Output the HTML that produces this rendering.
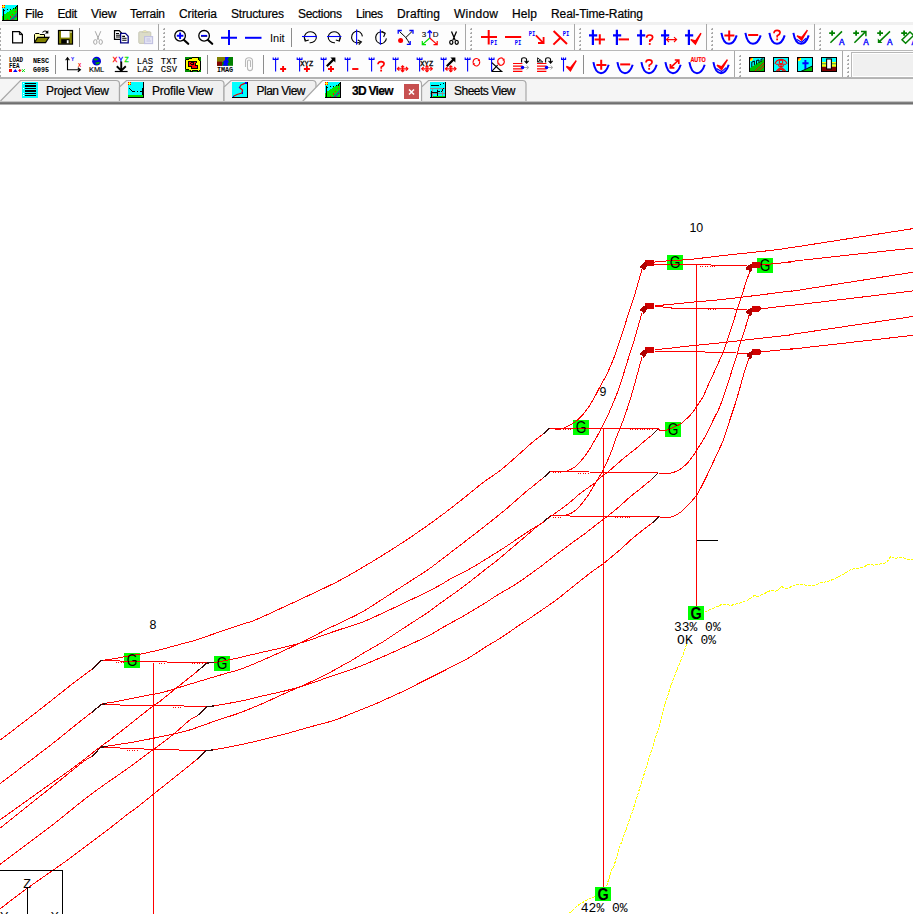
<!DOCTYPE html>
<html><head><meta charset="utf-8"><title>PLS-CADD 3D View</title>
<style>
html,body{margin:0;padding:0;}
body{width:913px;height:914px;overflow:hidden;background:#fff;position:relative;font-family:"Liberation Sans",sans-serif;font-size:12px;color:#000;}
#menubar{position:absolute;left:0;top:0;width:913px;height:22px;background:#fff;}
#menubar span{position:absolute;top:5.5px;height:16px;line-height:16px;white-space:nowrap;font-size:12px;-webkit-text-stroke:0.2px #000;}
#band{position:absolute;left:0;top:22px;width:913px;height:3px;background:#f0f0f0;}
#tb1{position:absolute;left:0;top:25px;width:913px;height:25px;background:#fdfdfd;}
#l50{position:absolute;left:0;top:50px;width:913px;height:1px;background:#b8b8b8;}
#tb2{position:absolute;left:0;top:51px;width:913px;height:26px;background:#fdfdfd;}
#l77{position:absolute;left:0;top:77px;width:913px;height:2px;background:#b2b2b2;}
#tabs{position:absolute;left:0;top:79px;width:913px;height:22px;background:#f5f5f5;}
.gd{position:absolute;width:2px;height:2px;background:linear-gradient(135deg,#e8e8e8 0,#e8e8e8 30%,#a8a8a8 31%);}
.sp{position:absolute;width:1px;background:#a8a8a8;}
.sq{position:absolute;width:1px;background:#8c8c8c;}
.ic{position:absolute;width:16px;height:16px;overflow:visible;}
.tabt{position:absolute;top:83px;height:16px;line-height:16px;font-size:12px;white-space:nowrap;-webkit-text-stroke:0.2px #000;}
#view{position:absolute;left:0;top:105px;width:913px;height:809px;background:#fff;overflow:hidden;}
#combo{position:absolute;left:852px;top:53px;width:70px;height:24px;background:#f0f0f0;border:1px solid #fff;outline:1px solid #b8b8b8;box-sizing:border-box;}
</style></head><body>

<div id="menubar">
<svg class="ic" style="left:2px;top:5px" viewBox="0 0 16 16" shape-rendering="crispEdges"><rect x="0" y="0" width="16" height="16" fill="#00ffff"/><path d="M0,11 L15,1 V16 H0 Z" fill="#00e800"/><path d="M6,16 L15,7 V11 L11,16 Z" fill="#108088"/><path d="M5,15.5 L14.5,5.5" stroke="#ff0000" stroke-width="1" stroke-dasharray="1.4 2.6" fill="none"/><path d="M10,15.5 L14.5,10.5" stroke="#ff0000" stroke-width="1" stroke-dasharray="1.4 2.6" fill="none"/><path d="M1.5,4 V15.5 M0,15.5 H16 M15.5,0 V16" stroke="#000" stroke-width="1" fill="none"/><rect x="2" y="5" width="1" height="1" fill="#000"/><rect x="5" y="4" width="1" height="1" fill="#000"/><rect x="8" y="4" width="1" height="1" fill="#000"/><rect x="11" y="3" width="1" height="1" fill="#000"/><rect x="13" y="2" width="1.4" height="1.6" fill="#000"/><rect x="14" y="1" width="1" height="1" fill="#000"/><rect x="0" y="0" width="3" height="3" fill="#ff0000"/><rect x="1" y="0" width="1" height="3" fill="#ffff00"/><rect x="0" y="1" width="3" height="1" fill="#ffff00"/></svg>
<span style="left:25px;letter-spacing:-0.281px">File</span>
<span style="left:57.5px;letter-spacing:-0.396px">Edit</span>
<span style="left:91px;letter-spacing:-0.099px">View</span>
<span style="left:130px;letter-spacing:-0.281px">Terrain</span>
<span style="left:179px;letter-spacing:-0.096px">Criteria</span>
<span style="left:231px;letter-spacing:-0.188px">Structures</span>
<span style="left:298px;letter-spacing:-0.290px">Sections</span>
<span style="left:356px;letter-spacing:-0.422px">Lines</span>
<span style="left:397px;letter-spacing:0.138px">Drafting</span>
<span style="left:454px;letter-spacing:0.263px">Window</span>
<span style="left:512px;letter-spacing:0.104px">Help</span>
<span style="left:551px;letter-spacing:-0.106px">Real-Time-Rating</span>
</div>
<div id="band"></div><div id="tb1"></div><div id="l50"></div><div id="tb2"></div><div id="l77"></div>
<div id="combo"></div>
<i class="gd" style="left:-1px;top:28px"></i><i class="gd" style="left:-1px;top:32px"></i><i class="gd" style="left:-1px;top:36px"></i><i class="gd" style="left:-1px;top:40px"></i><i class="gd" style="left:-1px;top:44px"></i><i class="gd" style="left:-1px;top:48px"></i><i class="gd" style="left:-1px;top:55px"></i><i class="gd" style="left:-1px;top:59px"></i><i class="gd" style="left:-1px;top:63px"></i><i class="gd" style="left:-1px;top:67px"></i><i class="gd" style="left:-1px;top:71px"></i><i class="gd" style="left:-1px;top:75px"></i>
<i class="sp" style="left:158px;top:24px;height:26px"></i>
<i class="gd" style="left:163px;top:28px"></i><i class="gd" style="left:163px;top:32px"></i><i class="gd" style="left:163px;top:36px"></i><i class="gd" style="left:163px;top:40px"></i><i class="gd" style="left:163px;top:44px"></i><i class="gd" style="left:163px;top:48px"></i>
<i class="sp" style="left:465px;top:24px;height:26px"></i>
<i class="gd" style="left:470px;top:28px"></i><i class="gd" style="left:470px;top:32px"></i><i class="gd" style="left:470px;top:36px"></i><i class="gd" style="left:470px;top:40px"></i><i class="gd" style="left:470px;top:44px"></i><i class="gd" style="left:470px;top:48px"></i>
<i class="sp" style="left:574px;top:24px;height:26px"></i>
<i class="gd" style="left:579px;top:28px"></i><i class="gd" style="left:579px;top:32px"></i><i class="gd" style="left:579px;top:36px"></i><i class="gd" style="left:579px;top:40px"></i><i class="gd" style="left:579px;top:44px"></i><i class="gd" style="left:579px;top:48px"></i>
<i class="sp" style="left:706px;top:24px;height:26px"></i>
<i class="gd" style="left:711px;top:28px"></i><i class="gd" style="left:711px;top:32px"></i><i class="gd" style="left:711px;top:36px"></i><i class="gd" style="left:711px;top:40px"></i><i class="gd" style="left:711px;top:44px"></i><i class="gd" style="left:711px;top:48px"></i>
<i class="sp" style="left:814px;top:24px;height:26px"></i>
<i class="gd" style="left:819px;top:28px"></i><i class="gd" style="left:819px;top:32px"></i><i class="gd" style="left:819px;top:36px"></i><i class="gd" style="left:819px;top:40px"></i><i class="gd" style="left:819px;top:44px"></i><i class="gd" style="left:819px;top:48px"></i>
<i class="sq" style="left:79px;top:28px;height:19px"></i>
<i class="sq" style="left:291px;top:28px;height:19px"></i>
<i class="sp" style="left:734px;top:51px;height:26px"></i>
<i class="gd" style="left:739px;top:55px"></i><i class="gd" style="left:739px;top:59px"></i><i class="gd" style="left:739px;top:63px"></i><i class="gd" style="left:739px;top:67px"></i><i class="gd" style="left:739px;top:71px"></i><i class="gd" style="left:739px;top:75px"></i>
<i class="sp" style="left:842px;top:51px;height:26px"></i>
<i class="gd" style="left:847px;top:55px"></i><i class="gd" style="left:847px;top:59px"></i><i class="gd" style="left:847px;top:63px"></i><i class="gd" style="left:847px;top:67px"></i><i class="gd" style="left:847px;top:71px"></i><i class="gd" style="left:847px;top:75px"></i>
<i class="sq" style="left:55px;top:55px;height:19px"></i>
<i class="sq" style="left:207px;top:55px;height:19px"></i>
<i class="sq" style="left:263px;top:55px;height:19px"></i>
<i class="sq" style="left:583px;top:55px;height:19px"></i>
<svg class="ic" style="left:10px;top:30px" viewBox="0 0 16 16"><path d="M2.6,1.6 H9.4 L12.4,4.6 V12.9 H2.6 Z" fill="#fff" stroke="#000" stroke-width="1.2"/><path d="M9.4,1.6 V4.6 H12.4" fill="none" stroke="#000" stroke-width="1"/></svg>
<svg class="ic" style="left:34px;top:30px" viewBox="0 0 16 16"><path d="M0.5,12.5 V4.5 L1.5,3.5 H5 L6,4.5 H10.5 V7" fill="#ffffa8" stroke="#000" stroke-width="1"/><path d="M0.6,12.6 L3.6,7.4 H15 L11.6,12.6 Z" fill="#808000" stroke="#000" stroke-width="1.1"/><path d="M8.5,2.5 Q10.5,0 13,1.8" fill="none" stroke="#000" stroke-width="1.1"/><path d="M14.3,0.2 V3.6 H10.9 Z" fill="#000"/></svg>
<svg class="ic" style="left:58px;top:30px" viewBox="0 0 16 16"><rect x="0.5" y="0.5" width="14" height="13.6" fill="#808000" stroke="#000" stroke-width="1.2"/><rect x="3" y="1" width="8.6" height="6.6" fill="#fff"/><rect x="12.4" y="1.4" width="1.2" height="1.4" fill="#fff"/><rect x="3.2" y="9.2" width="8.4" height="4.4" fill="#000"/><rect x="8.8" y="10.2" width="1.8" height="3" fill="#fff"/></svg>
<svg class="ic" style="left:90px;top:30px" viewBox="0 0 16 16"><g fill="none" stroke="#a8a8a8" stroke-width="1.0"><path d="M5.2,1.2 L8.9,9.8 M10.8,1.2 L7.1,9.8"/><ellipse cx="5.3" cy="12" rx="1.7" ry="2.3"/><ellipse cx="10.7" cy="12" rx="1.7" ry="2.3"/></g></svg>
<svg class="ic" style="left:114px;top:30px" viewBox="0 0 16 16"><path d="M0.5,0.7 H5.2 L7.5,3 V9.3 H0.5 Z" fill="#fff" stroke="#000" stroke-width="1.2"/><path d="M2,3.5 H5 M2,5.2 H6 M2,7 H6" stroke="#000" stroke-width="1"/><path d="M6.6,3.4 H11.4 L14.2,6.2 V12.8 H6.6 Z" fill="#fff" stroke="#000080" stroke-width="1.3"/><path d="M8.2,6.4 H11 M8.2,8.3 H12.6 M8.2,10.3 H12.6" stroke="#000" stroke-width="1.1"/></svg>
<svg class="ic" style="left:138px;top:30px" viewBox="0 0 16 16"><rect x="0.8" y="1.8" width="12" height="11.6" rx="1" fill="#dcdcc8" stroke="#c8c8b8" stroke-width="1"/><path d="M4,2.5 L5.5,0.8 H8.2 L9.8,2.5 Z" fill="#f4f0b0" stroke="#c8c8b8" stroke-width="0.8"/><rect x="6.6" y="6.6" width="8" height="7" fill="#e4e4f4" stroke="#c0c0e0" stroke-width="1.1"/><path d="M8.4,9 H12 M8.4,11 H13" stroke="#c0c0e0" stroke-width="1"/></svg>
<svg class="ic" style="left:174px;top:30px" viewBox="0 0 16 16"><circle cx="6.1" cy="5.8" r="5.3" fill="#fff" stroke="#000" stroke-width="1.3"/><path d="M10,10 L14.2,13.8" stroke="#000" stroke-width="2.2" stroke-linecap="round"/><path d="M2.8,5.8 H9.4 M6.1,2.5 V9.1" stroke="#0000ff" stroke-width="1.9"/></svg>
<svg class="ic" style="left:198px;top:30px" viewBox="0 0 16 16"><circle cx="6.1" cy="5.8" r="5.3" fill="#fff" stroke="#000" stroke-width="1.3"/><path d="M10,10 L14.2,13.8" stroke="#000" stroke-width="2.2" stroke-linecap="round"/><path d="M3,5.8 H9.2" stroke="#0000ff" stroke-width="1.8"/><path d="M3,6.4 H9.2" stroke="#000" stroke-width="0.5"/></svg>
<svg class="ic" style="left:222px;top:30px" viewBox="0 0 16 16"><path d="M-1,7.8 H15 M7,0 V15" stroke="#0000ff" stroke-width="2" fill="none"/></svg>
<svg class="ic" style="left:246px;top:30px" viewBox="0 0 16 16"><path d="M-1,7.8 H15.5" stroke="#0000ff" stroke-width="2" fill="none"/></svg>
<svg class="ic" style="left:270px;top:30px" viewBox="0 0 16 16"><text x="0" y="12" font-family="Liberation Sans, sans-serif" font-size="11" fill="#000">Init</text></svg>
<svg class="ic" style="left:302px;top:30px" viewBox="0 0 16 16"><path d="M3.4,10.3 A6,5.5 0 1 1 7.6,12.7" fill="none" stroke="#000" stroke-width="1.1"/><path d="M2.2,7.4 L3.2,11 L6.8,10" fill="none" stroke="#000" stroke-width="1.1"/><path d="M0,6.5 H15" stroke="#0000ff" stroke-width="1.1"/></svg>
<svg class="ic" style="left:326px;top:30px" viewBox="0 0 16 16"><path d="M13.2,10.3 A6,5.5 0 1 0 9,12.7" fill="none" stroke="#000" stroke-width="1.1"/><path d="M14.4,7.4 L13.4,11 L9.8,10" fill="none" stroke="#000" stroke-width="1.1"/><path d="M1,6.5 H15.4" stroke="#0000ff" stroke-width="1.1"/></svg>
<svg class="ic" style="left:350px;top:30px" viewBox="0 0 16 16"><path d="M10.6,11.4 A5.4,5.8 0 1 1 12.4,6.4" fill="none" stroke="#000" stroke-width="1.1"/><path d="M7.8,10 L11.4,11.8 L8.8,14.6" fill="none" stroke="#000" stroke-width="1.1"/><path d="M6.6,-0.4 V14.8" stroke="#0000ff" stroke-width="1.1"/></svg>
<svg class="ic" style="left:374px;top:30px" viewBox="0 0 16 16"><path d="M10.6,3.4 A5.4,5.8 0 1 0 12.4,8.4" fill="none" stroke="#000" stroke-width="1.1"/><path d="M7.6,1.2 L11.2,3.2 L9.6,7" fill="none" stroke="#000" stroke-width="1.1"/><path d="M6.4,-0.4 V14.8" stroke="#0000ff" stroke-width="1.1"/></svg>
<svg class="ic" style="left:398px;top:30px" viewBox="0 0 16 16"><path d="M1.5,1.5 L7.8,7.5 L14,1.5 M7.8,7.5 Q9.6,10 11.6,13.6" fill="none" stroke="#000" stroke-width="1"/><path d="M0.2,3.8 V0.5 H3.8 M11.4,0.5 H15 V3.8 M8.8,14.4 H12.2 V11" fill="none" stroke="#0000ff" stroke-width="1.3"/><circle cx="2.6" cy="10.6" r="2.5" fill="#ff0000"/></svg>
<svg class="ic" style="left:422px;top:30px" viewBox="0 0 16 16"><text x="-0.2" y="7.4" font-family="Liberation Sans, monospace" font-size="8" font-weight="normal" fill="#000000" stroke="#000000" stroke-width="0.1" text-anchor="start">3</text><text x="10.8" y="7.4" font-family="Liberation Sans, monospace" font-size="8" font-weight="normal" fill="#000000" stroke="#000000" stroke-width="0.1" text-anchor="start">D</text><path d="M7.75,8 V0.8 M5.6,3 L7.75,0.6 L9.9,3" fill="none" stroke="#0000ff" stroke-width="1.2"/><path d="M7.75,8 L0.6,14.4 M0.3,11 V14.7 H4" fill="none" stroke="#00e000" stroke-width="1.2"/><path d="M7.75,8 L14.9,14.4 M15.2,11 V14.7 H11.5" fill="none" stroke="#ff0000" stroke-width="1.2"/></svg>
<svg class="ic" style="left:446px;top:30px" viewBox="0 0 16 16"><g fill="none" stroke="#000" stroke-width="1.25"><path d="M5.5,1.5 L9.2,10.2 M10.5,1.5 L6.8,10.2"/><ellipse cx="5.3" cy="12.3" rx="1.6" ry="2"/><ellipse cx="10.7" cy="12.3" rx="1.6" ry="2"/></g></svg>
<svg class="ic" style="left:481px;top:30px" viewBox="0 0 16 16"><path d="M0,7 H16 M7.7,0 V14.6" stroke="#ff0000" stroke-width="2" fill="none"/><text x="0" y="0" font-family="Liberation Mono, monospace" font-size="7.6" font-weight="bold" fill="#0000ff" stroke="#0000ff" stroke-width="0" text-anchor="start" transform="translate(9.6 14.6) scale(0.72 1)">PI</text></svg>
<svg class="ic" style="left:505px;top:30px" viewBox="0 0 16 16"><path d="M0,7 H16.2" stroke="#ff0000" stroke-width="2" fill="none"/><text x="0" y="0" font-family="Liberation Mono, monospace" font-size="7.6" font-weight="bold" fill="#0000ff" stroke="#0000ff" stroke-width="0" text-anchor="start" transform="translate(9.8 14.6) scale(0.72 1)">PI</text></svg>
<svg class="ic" style="left:529px;top:30px" viewBox="0 0 16 16"><text x="0" y="0" font-family="Liberation Mono, monospace" font-size="7.6" font-weight="bold" fill="#0000ff" stroke="#0000ff" stroke-width="0" text-anchor="start" transform="translate(-0.2 5.8) scale(0.72 1)">PI</text><path d="M6.9,5.4 L14.2,12.8 M9,13 H14.6 V7" stroke="#ff0000" stroke-width="1.8" fill="none"/></svg>
<svg class="ic" style="left:553px;top:30px" viewBox="0 0 16 16"><path d="M0.6,1 L14,14 M0.4,14.6 L8.2,7" stroke="#ff0000" stroke-width="2" fill="none"/><text x="0" y="0" font-family="Liberation Mono, monospace" font-size="7.6" font-weight="bold" fill="#0000ff" stroke="#0000ff" stroke-width="0" text-anchor="start" transform="translate(9.8 5.8) scale(0.72 1)">PI</text></svg>
<svg class="ic" style="left:590px;top:30px" viewBox="0 0 16 16"><path d="M2.9,-0.2 V15 M-1,5.4 H7.2" stroke="#0000ff" stroke-width="2.2" fill="none"/><path d="M4.6,9.4 H15 M9.8,4.2 V14.4" stroke="#ff0000" stroke-width="2" fill="none"/></svg>
<svg class="ic" style="left:614px;top:30px" viewBox="0 0 16 16"><path d="M2.9,-0.2 V15 M-1,5.4 H7.2" stroke="#0000ff" stroke-width="2.2" fill="none"/><path d="M4.6,9.4 H15" stroke="#ff0000" stroke-width="2" fill="none"/></svg>
<svg class="ic" style="left:638px;top:30px" viewBox="0 0 16 16"><path d="M2.9,-0.2 V15 M-1,5.4 H7.2" stroke="#0000ff" stroke-width="2.2" fill="none"/><path d="M8.6,7.744000000000001 Q8.6,5 11.638,5 Q14.676,5 14.676,7.45 Q14.676,9.116 11.838,10.39 V12.056000000000001" fill="none" stroke="#ff0000" stroke-width="1.7"/><rect x="10.838" y="13.100000000000001" width="1.8" height="1.8" fill="#ff0000"/></svg>
<svg class="ic" style="left:662px;top:30px" viewBox="0 0 16 16"><path d="M2.9,-0.2 V15 M-1,5.4 H7.2" stroke="#0000ff" stroke-width="2.2" fill="none"/><path d="M4.4,9.6 H14.6 M7,7.2 L4.4,9.6 L7,12 M12,7.2 L14.6,9.6 L12,12" stroke="#ff0000" stroke-width="1.1" fill="none"/></svg>
<svg class="ic" style="left:686px;top:30px" viewBox="0 0 16 16"><path d="M2.9,-0.2 V15 M-1,5.4 H7.2" stroke="#0000ff" stroke-width="2.2" fill="none"/><path d="M4.8,9.6 L9.4,14 L15,3.2 L9.6,11 Z" fill="#ff0000" stroke="#ff0000" stroke-width="1.4" stroke-linejoin="miter"/></svg>
<svg class="ic" style="left:721px;top:30px" viewBox="0 0 16 16"><path d="M0.4,2.8 Q2.2,13.8 8,13.8 Q13,13.8 15.7,5.4" fill="none" stroke="#0000ff" stroke-width="2"/><path d="M3.4,5.5 H13.4 M8.2,0.4 V10.4" stroke="#ff0000" stroke-width="2" fill="none"/></svg>
<svg class="ic" style="left:745px;top:30px" viewBox="0 0 16 16"><path d="M0.4,2.8 Q2.2,13.8 8,13.8 Q13,13.8 15.7,5.4" fill="none" stroke="#0000ff" stroke-width="2"/><path d="M3.2,5 H13.2" stroke="#ff0000" stroke-width="2" fill="none"/></svg>
<svg class="ic" style="left:769px;top:30px" viewBox="0 0 16 16"><path d="M0.4,2.8 Q2.2,13.8 8,13.8 Q13,13.8 15.7,5.4" fill="none" stroke="#0000ff" stroke-width="2"/><path d="M5,3.1440000000000006 Q5,0.4 8.038,0.4 Q11.076,0.4 11.076,2.85 Q11.076,4.516000000000001 8.238,5.790000000000001 V7.456" fill="none" stroke="#ff0000" stroke-width="1.7"/><rect x="7.238" y="8.500000000000002" width="1.8" height="1.8" fill="#ff0000"/></svg>
<svg class="ic" style="left:793px;top:30px" viewBox="0 0 16 16"><path d="M0.4,2.8 Q2.2,13.8 8,13.8 Q13,13.8 15.7,5.4" fill="none" stroke="#0000ff" stroke-width="2"/><path d="M4,5.8 L8.6,10.2 L14.4,0.2 L8.8,7.4 Z" fill="#ff0000" stroke="#ff0000" stroke-width="1.4"/><path d="M3.4,9.2 L8.6,12.2 L13.2,8.2" fill="none" stroke="#0000ff" stroke-width="1.2"/></svg>
<svg class="ic" style="left:829px;top:30px" viewBox="0 0 16 16"><path d="M0.2,3.1 H6 M3.1,0.4 V5.8" stroke="#008000" stroke-width="1.8" fill="none"/><path d="M1.4,12.8 L13,1.4" stroke="#008000" stroke-width="1.5"/><text x="10" y="14.8" font-family="Liberation Mono, monospace" font-size="9.2" font-weight="normal" fill="#0000ff" stroke="#0000ff" stroke-width="0.35" text-anchor="start">A</text></svg>
<svg class="ic" style="left:853px;top:30px" viewBox="0 0 16 16"><path d="M0.2,3.1 H6 M3.1,0.4 V5.8" stroke="#008000" stroke-width="1.8" fill="none"/><path d="M1.4,12.8 L12.6,1.6 M8,1.4 H12.9 V6.2" stroke="#008000" stroke-width="1.5" fill="none"/><text x="10.2" y="14.8" font-family="Liberation Mono, monospace" font-size="9.2" font-weight="normal" fill="#0000ff" stroke="#0000ff" stroke-width="0.35" text-anchor="start">A</text></svg>
<svg class="ic" style="left:877px;top:30px" viewBox="0 0 16 16"><path d="M0.2,3.1 H6 M3.1,0.4 V5.8" stroke="#008000" stroke-width="1.8" fill="none"/><path d="M1.6,12.4 L13,1.4" stroke="#008000" stroke-width="1.5" fill="none"/><path d="M0.8,8.6 V13 H5.4 Z" fill="#008000"/><text x="10" y="14.8" font-family="Liberation Mono, monospace" font-size="9.2" font-weight="normal" fill="#0000ff" stroke="#0000ff" stroke-width="0.35" text-anchor="start">A</text></svg>
<svg class="ic" style="left:901px;top:30px" viewBox="0 0 16 16"><path d="M0.2,3.1 H6 M3.1,0.4 V5.8" stroke="#008000" stroke-width="1.8" fill="none"/><path d="M1,9.8 L9,2 L12.6,5.4 L4.6,13.2 Z" stroke="#008000" stroke-width="1.5" fill="none"/><text x="10.6" y="14.8" font-family="Liberation Mono, monospace" font-size="9.2" font-weight="normal" fill="#0000ff" stroke="#0000ff" stroke-width="0.35" text-anchor="start">A</text></svg>
<svg class="ic" style="left:9px;top:57px" viewBox="0 0 16 16"><text x="0" y="0" font-family="Liberation Mono, monospace" font-size="7.4" font-weight="bold" fill="#000000" stroke="#000000" stroke-width="0" text-anchor="start" transform="translate(0 5.3) scale(0.79 1)">LOAD</text><text x="0" y="0" font-family="Liberation Mono, monospace" font-size="7.4" font-weight="bold" fill="#000000" stroke="#000000" stroke-width="0" text-anchor="start" transform="translate(0 11.2) scale(0.79 1)">FEA</text><rect x="0" y="12" width="3" height="3" fill="#ff0000"/><path d="M4,15 L6.3,12 L8.6,15 Z" fill="#0000ff"/><path d="M9.4,13.5 H12.2 M10.8,12.1 V14.9" stroke="#ff0000" stroke-width="1.2"/><path d="M13,12.2 L15.8,15 M15.8,12.2 L13,15" stroke="#00e000" stroke-width="1"/></svg>
<svg class="ic" style="left:33px;top:57px" viewBox="0 0 16 16"><text x="0" y="0" font-family="Liberation Mono, monospace" font-size="7.8" font-weight="bold" fill="#000000" stroke="#000000" stroke-width="0" text-anchor="start" transform="translate(0 5.6) scale(0.86 1)">NESC</text><text x="0" y="0" font-family="Liberation Mono, monospace" font-size="7.8" font-weight="bold" fill="#000000" stroke="#000000" stroke-width="0" text-anchor="start" transform="translate(0 14.5) scale(0.86 1)">G095</text></svg>
<svg class="ic" style="left:65px;top:57px" viewBox="0 0 16 16"><path d="M2.5,1 V12.75 H15 M0.6,3.2 L2.5,0.6 L4.4,3.2 M12.8,10.8 L15.4,12.75 L12.8,14.7" stroke="#000" stroke-width="1.1" fill="none"/><text x="6.1" y="3.7" font-family="Liberation Sans, monospace" font-size="4.8" font-weight="bold" fill="#0000ff" stroke="#0000ff" stroke-width="0" text-anchor="start">Y</text><text x="12.9" y="10.3" font-family="Liberation Sans, monospace" font-size="4.8" font-weight="bold" fill="#ff0000" stroke="#ff0000" stroke-width="0" text-anchor="start">X</text></svg>
<svg class="ic" style="left:89px;top:57px" viewBox="0 0 16 16"><circle cx="7.6" cy="4.2" r="4.4" fill="#0000e0"/><path d="M4.6,2.2 Q7,0.4 9.4,2.4 Q7.6,3.8 5.6,3.4 Z M6,5.8 Q8.8,4.6 11.4,5.4 Q9.6,7.6 7.4,7.4 Z" fill="#00a000"/><text x="0" y="0" font-family="Liberation Sans, monospace" font-size="7.8" font-weight="normal" fill="#000000" stroke="#000000" stroke-width="0.15" text-anchor="start" transform="translate(0 15) scale(0.95 1)">KML</text></svg>
<svg class="ic" style="left:113px;top:57px" viewBox="0 0 16 16"><text x="-0.2" y="5" font-family="Liberation Sans, monospace" font-size="6.8" font-weight="normal" fill="#ff0000" stroke="#ff0000" stroke-width="0.3" text-anchor="start">X</text><text x="5.6" y="5" font-family="Liberation Sans, monospace" font-size="6.8" font-weight="normal" fill="#0000ff" stroke="#0000ff" stroke-width="0.3" text-anchor="start">Y</text><text x="11.4" y="5" font-family="Liberation Sans, monospace" font-size="6.8" font-weight="normal" fill="#00e000" stroke="#00e000" stroke-width="0.3" text-anchor="start">Z</text><path d="M8.25,4.6 V13.4 M3.8,9.2 L8.25,13.6 L12.8,9.2" stroke="#000" stroke-width="1.9" fill="none"/><path d="M1.8,14.5 H14.6" stroke="#000" stroke-width="1.2"/></svg>
<svg class="ic" style="left:137px;top:57px" viewBox="0 0 16 16"><text x="-0.2" y="6.5" font-family="Liberation Mono, monospace" font-size="8.9" font-weight="normal" fill="#000000" stroke="#000000" stroke-width="0.12" text-anchor="start" letter-spacing="0.1">LAS</text><text x="-0.2" y="14.5" font-family="Liberation Mono, monospace" font-size="8.9" font-weight="normal" fill="#000000" stroke="#000000" stroke-width="0.12" text-anchor="start" letter-spacing="0.1">LAZ</text></svg>
<svg class="ic" style="left:161px;top:57px" viewBox="0 0 16 16"><text x="-0.2" y="6.5" font-family="Liberation Mono, monospace" font-size="8.9" font-weight="normal" fill="#000000" stroke="#000000" stroke-width="0.12" text-anchor="start" letter-spacing="0.1">TXT</text><text x="-0.2" y="14.5" font-family="Liberation Mono, monospace" font-size="8.9" font-weight="normal" fill="#000000" stroke="#000000" stroke-width="0.12" text-anchor="start" letter-spacing="0.1">CSV</text></svg>
<svg class="ic" style="left:185px;top:57px" viewBox="0 0 16 16"><g shape-rendering="crispEdges"><rect x="0" y="0" width="16" height="15" fill="#008c00"/><path d="M7,0 H13 L14,1 L14.5,3 L15.6,4 V13 L14,15 H12.5 L12,14 H8 L7,15 H5.5 L4.5,13.5 L1,13 L0,12 V3 L1,2 H3 L4,1 H6.5 Z" fill="#000"/><path d="M7.6,1 H12.4 L13.2,1.8 L13.8,3.6 L14.7,4.4 V12.6 L13.4,14 H13 L12.4,13 H7.6 L6.8,14 H6 L5.2,12.6 L1.6,12.2 L1,11.6 V3.6 L1.6,3 H3.4 L4.4,2 H6.8 Z" fill="#ffff00"/><path d="M4,3.6 H11 L11.6,4.4 V6.4 L10.6,6.6 V8 H12.6 L12.8,11.4 L12,12 H6.6 L6.2,10 L3.2,9.6 L3,5 L3.6,4 Z" fill="#000"/><path d="M4.6,4.6 H10.6 V6 L9.8,6.2 V8.7 L12,8.8 V11 H7.4 L7.2,9 L4.2,8.8 V5.4 Z" fill="#ff0000"/><rect x="5.4" y="5.4" width="3.8" height="2.4" rx="0.8" fill="#000"/><rect x="6.4" y="6.2" width="1.8" height="0.8" fill="#ff0000"/></g></svg>
<svg class="ic" style="left:217px;top:57px" viewBox="0 0 16 16"><rect x="0" y="0" width="16" height="8.8" fill="#008000"/><rect x="0" y="0" width="8" height="5" fill="#808000"/><rect x="0" y="4.6" width="5" height="4.2" fill="#800000"/><path d="M8,0 H12 L10.6,2.6 L12,5 L10.4,6.4 L11.6,8.8 H5.6 L7,6 L6,4.4 L8,3 Z" fill="#0000ff"/><text x="0" y="0" font-family="Liberation Mono, monospace" font-size="7.2" font-weight="bold" fill="#000000" stroke="#000000" stroke-width="0" text-anchor="start" transform="translate(-0.1 15) scale(0.94 1)">IMAG</text></svg>
<svg class="ic" style="left:241px;top:57px" viewBox="0 0 16 16"><path d="M4.5,10 V4 Q4.5,0.8 8,0.8 Q11.5,0.8 11.5,4 V11 Q11.5,13.6 9,13.6 Q6.5,13.6 6.5,11 V4.5 Q6.5,3 8,3 Q9.5,3 9.5,4.5 V10" fill="none" stroke="#b8b8b8" stroke-width="1.1"/></svg>
<svg class="ic" style="left:272px;top:57px" viewBox="0 0 16 16"><path d="M3.6,0.4 V14.6 M1.2,0.4 V2.4 H6 V0.4" stroke="#0000ff" stroke-width="1.1" fill="none"/><path d="M8.1,12 H14.1 M11.1,9 V15" stroke="#ff0000" stroke-width="1.9" fill="none"/></svg>
<svg class="ic" style="left:296px;top:57px" viewBox="0 0 16 16"><path d="M3.6,0.4 V14.6 M1.2,0.4 V2.4 H6 V0.4" stroke="#0000ff" stroke-width="1.1" fill="none"/><text x="4.2" y="9" font-family="Liberation Mono, monospace" font-size="7" font-weight="normal" fill="#000000" stroke="#000000" stroke-width="0.3" text-anchor="start" letter-spacing="0.2">XYZ</text><path d="M7.9,12 H13.9 M10.9,9 V15" stroke="#ff0000" stroke-width="1.9" fill="none"/></svg>
<svg class="ic" style="left:320px;top:57px" viewBox="0 0 16 16"><path d="M3.6,0.4 V14.6 M1.2,0.4 V2.4 H6 V0.4" stroke="#0000ff" stroke-width="1.1" fill="none"/><path d="M6.8,9.2 L14.4,1.6" stroke="#000" stroke-width="2.2" fill="none"/><path d="M10.4,0.6 H15.4 V5.6 Z" fill="#000"/><path d="M8,12 H14 M11,9 V15" stroke="#ff0000" stroke-width="1.9" fill="none"/></svg>
<svg class="ic" style="left:344px;top:57px" viewBox="0 0 16 16"><path d="M3.6,0.4 V14.6 M1.2,0.4 V2.4 H6 V0.4" stroke="#0000ff" stroke-width="1.1" fill="none"/><path d="M8.2,12 H14.4" stroke="#ff0000" stroke-width="1.9"/></svg>
<svg class="ic" style="left:368px;top:57px" viewBox="0 0 16 16"><path d="M3.6,0.4 V14.6 M1.2,0.4 V2.4 H6 V0.4" stroke="#0000ff" stroke-width="1.1" fill="none"/><path d="M10,7.344 Q10,4.6 13.038,4.6 Q16.076,4.6 16.076,7.05 Q16.076,8.716000000000001 13.238,9.99 V11.655999999999999" fill="none" stroke="#ff0000" stroke-width="1.7"/><rect x="12.238" y="12.700000000000001" width="1.8" height="1.8" fill="#ff0000"/></svg>
<svg class="ic" style="left:392px;top:57px" viewBox="0 0 16 16"><path d="M3.6,0.4 V14.6 M1.2,0.4 V2.4 H6 V0.4" stroke="#0000ff" stroke-width="1.1" fill="none"/><path d="M5.3999999999999995,11.8 H15.8 M10.6,9.0 V14.600000000000001" stroke="#ff0000" stroke-width="1.3" fill="none"/><path d="M7.199999999999999,10.0 L5.3999999999999995,11.8 L7.199999999999999,13.600000000000001 M14.0,10.0 L15.8,11.8 L14.0,13.600000000000001 M9.0,10.4 L10.6,8.9 L12.2,10.4 M9.0,13.200000000000001 L10.6,14.700000000000001 L12.2,13.200000000000001" stroke="#ff0000" stroke-width="1.2" fill="none"/></svg>
<svg class="ic" style="left:416px;top:57px" viewBox="0 0 16 16"><path d="M3.6,0.4 V14.6 M1.2,0.4 V2.4 H6 V0.4" stroke="#0000ff" stroke-width="1.1" fill="none"/><text x="4.2" y="9" font-family="Liberation Mono, monospace" font-size="7" font-weight="normal" fill="#000000" stroke="#000000" stroke-width="0.3" text-anchor="start" letter-spacing="0.2">XYZ</text><path d="M5.8,11.8 H16.2 M11,9.0 V14.600000000000001" stroke="#ff0000" stroke-width="1.3" fill="none"/><path d="M7.6,10.0 L5.8,11.8 L7.6,13.600000000000001 M14.4,10.0 L16.2,11.8 L14.4,13.600000000000001 M9.4,10.4 L11,8.9 L12.6,10.4 M9.4,13.200000000000001 L11,14.700000000000001 L12.6,13.200000000000001" stroke="#ff0000" stroke-width="1.2" fill="none"/></svg>
<svg class="ic" style="left:440px;top:57px" viewBox="0 0 16 16"><path d="M3.6,0.4 V14.6 M1.2,0.4 V2.4 H6 V0.4" stroke="#0000ff" stroke-width="1.1" fill="none"/><path d="M6.8,9.2 L14.4,1.6" stroke="#000" stroke-width="2.2" fill="none"/><path d="M10.4,0.6 H15.4 V5.6 Z" fill="#000"/><path d="M5.6000000000000005,11.8 H16.0 M10.8,9.0 V14.600000000000001" stroke="#ff0000" stroke-width="1.3" fill="none"/><path d="M7.4,10.0 L5.6000000000000005,11.8 L7.4,13.600000000000001 M14.200000000000001,10.0 L16.0,11.8 L14.200000000000001,13.600000000000001 M9.200000000000001,10.4 L10.8,8.9 L12.4,10.4 M9.200000000000001,13.200000000000001 L10.8,14.700000000000001 L12.4,13.200000000000001" stroke="#ff0000" stroke-width="1.2" fill="none"/></svg>
<svg class="ic" style="left:464px;top:57px" viewBox="0 0 16 16"><path d="M3.6,0.4 V14.6 M1.2,0.4 V2.4 H6 V0.4" stroke="#0000ff" stroke-width="1.1" fill="none"/><path d="M9.100000000000001,5.8 A3.3,3.9 0 0 1 15.1,3.2" fill="none" stroke="#ff0000" stroke-width="1.1"/><path d="M15.7,4.6000000000000005 A3.3,3.9 0 0 1 9.700000000000001,7.2" fill="none" stroke="#ff0000" stroke-width="1.1"/><path d="M13.5,3.6 L16.099999999999998,5.0 L15.899999999999999,2.2 Z M11.3,6.800000000000001 L8.700000000000001,5.4 L8.900000000000002,8.2 Z" fill="#ff0000"/></svg>
<svg class="ic" style="left:488px;top:57px" viewBox="0 0 16 16"><path d="M3.6,0.4 V14.6 M1.2,0.4 V2.4 H6 V0.4" stroke="#0000ff" stroke-width="1.1" fill="none"/><path d="M3.6,14.5 H13.6 L3.8,5.6 M3.8,14.4 L9.6,8.2" stroke="#000" stroke-width="1.2" fill="none"/><path d="M9.7,5.199999999999999 A3.3,3.9 0 0 1 15.700000000000001,2.5999999999999996" fill="none" stroke="#ff0000" stroke-width="1.1"/><path d="M16.3,3.9999999999999996 A3.3,3.9 0 0 1 10.299999999999999,6.6" fill="none" stroke="#ff0000" stroke-width="1.1"/><path d="M14.100000000000001,2.9999999999999996 L16.7,4.3999999999999995 L16.5,1.5999999999999996 Z M11.899999999999999,6.199999999999999 L9.299999999999999,4.8 L9.5,7.6 Z" fill="#ff0000"/></svg>
<svg class="ic" style="left:513px;top:57px" viewBox="0 0 16 16"><path d="M0,6.5 H9.4 M0,9.2 H9.4 M0,11.8 H9.4 M0,14.4 H9.4" stroke="#ff0000" stroke-width="1.2"/><path d="M10.4,10.5 H15.6 M13.6,8.6 L15.8,10.5 L13.6,12.4" stroke="#a8a8a8" stroke-width="1" fill="none"/><circle cx="9.6" cy="10.5" r="1.7" fill="#0000ff"/><path d="M8.6,5.6 V2.6 Q8.6,0.8 11,0.8 Q13.6,0.8 13.6,2.8 V5.4 M11.6,3.8 L13.6,6.2 L15.6,3.8" stroke="#000" stroke-width="1.1" fill="none"/></svg>
<svg class="ic" style="left:537px;top:57px" viewBox="0 0 16 16"><path d="M0,6.5 H9.4 M0,9.2 H9.4 M0,11.8 H9.4 M0,14.4 H9.4" stroke="#ff0000" stroke-width="1.2"/><path d="M10.4,10.5 H15.6 M13.6,8.6 L15.8,10.5 L13.6,12.4" stroke="#a8a8a8" stroke-width="1" fill="none"/><circle cx="9.6" cy="10.5" r="1.7" fill="#0000ff"/><path d="M8.6,5.6 V2.6 Q8.6,0.8 11,0.8 Q13.6,0.8 13.6,2.8 V5.4 M11.6,3.8 L13.6,6.2 L15.6,3.8" stroke="#000" stroke-width="1.1" fill="none"/><path d="M0.6,5 V0.8 L5.8,5 Z M0.6,5 L3.4,2.8" stroke="#000" stroke-width="0.9" fill="none"/></svg>
<svg class="ic" style="left:560px;top:57px" viewBox="0 0 16 16"><path d="M3.5,0.4 V14.6 M1.6,0.4 V2.4 H5.6 V0.4" stroke="#0000ff" stroke-width="1.1" fill="none"/><path d="M6.4,9.4 L10.4,13.8 L16.2,3.6 L10.4,11 Z" fill="#ff0000" stroke="#ff0000" stroke-width="1.5"/></svg>
<svg class="ic" style="left:593px;top:57px" viewBox="0 0 16 16"><path d="M0.4,5.199999999999999 Q2.2,16.2 8,16.2 Q13,16.2 15.7,7.800000000000001" fill="none" stroke="#0000ff" stroke-width="2"/><path d="M3.4,7.9 H13.4 M8.2,2.8 V12.8" stroke="#ff0000" stroke-width="2" fill="none"/></svg>
<svg class="ic" style="left:617px;top:57px" viewBox="0 0 16 16"><path d="M0.4,5.199999999999999 Q2.2,16.2 8,16.2 Q13,16.2 15.7,7.800000000000001" fill="none" stroke="#0000ff" stroke-width="2"/><path d="M3.2,7.4 H13.2" stroke="#ff0000" stroke-width="2" fill="none"/></svg>
<svg class="ic" style="left:641px;top:57px" viewBox="0 0 16 16"><path d="M0.4,5.199999999999999 Q2.2,16.2 8,16.2 Q13,16.2 15.7,7.800000000000001" fill="none" stroke="#0000ff" stroke-width="2"/><path d="M5,5.5440000000000005 Q5,2.8 8.038,2.8 Q11.076,2.8 11.076,5.25 Q11.076,6.916 8.238,8.190000000000001 V9.856" fill="none" stroke="#ff0000" stroke-width="1.7"/><rect x="7.238" y="10.900000000000002" width="1.8" height="1.8" fill="#ff0000"/></svg>
<svg class="ic" style="left:665px;top:57px" viewBox="0 0 16 16"><path d="M0.4,5.199999999999999 Q2.2,16.2 8,16.2 Q13,16.2 15.7,7.800000000000001" fill="none" stroke="#0000ff" stroke-width="2"/><path d="M13.6,3.0 L5.6,10.6 M9.8,3.0 H13.8 V7.0 M5.4,7.0 V10.8 H9.4" stroke="#ff0000" stroke-width="1.7" fill="none"/></svg>
<svg class="ic" style="left:689px;top:57px" viewBox="0 0 16 16"><path d="M0.4,5.199999999999999 Q2.2,16.2 8,16.2 Q13,16.2 15.7,7.800000000000001" fill="none" stroke="#0000ff" stroke-width="2"/><text x="0" y="0" font-family="Liberation Sans, monospace" font-size="7" font-weight="bold" fill="#ff0000" stroke="#ff0000" stroke-width="0.2" text-anchor="start" transform="translate(1.4 5.199999999999999) scale(0.78 1)">AUTO</text></svg>
<svg class="ic" style="left:713px;top:57px" viewBox="0 0 16 16"><path d="M0.4,5.199999999999999 Q2.2,16.2 8,16.2 Q13,16.2 15.7,7.800000000000001" fill="none" stroke="#0000ff" stroke-width="2"/><path d="M4,8.2 L8.6,12.6 L14.4,2.6 L8.8,9.8 Z" fill="#ff0000" stroke="#ff0000" stroke-width="1.4"/><path d="M3.4,11.6 L8.6,14.6 L13.2,10.6" fill="none" stroke="#0000ff" stroke-width="1.2"/></svg>
<svg class="ic" style="left:749px;top:57px" viewBox="0 0 16 16"><rect x="0.5" y="0.5" width="15" height="14" fill="#00ffff" stroke="#000" stroke-width="1"/><path d="M1,14 V11 L15,2 V14 Z" fill="#00c000"/><path d="M6,14 L15,6 M9.5,14 L15,9" stroke="#ff0000" stroke-width="1" fill="none"/><path d="M2.8,10 V5.2 L5.4,4 V8 M7.6,7.4 V3.4 L10,3 V6 M12,5 V2.2 L14.4,1.8" stroke="#000" stroke-width="1" fill="none"/><path d="M1,1 H4 V2.6 L2.6,4 H1 Z" fill="#ffff00"/><rect x="1" y="1" width="1.4" height="1.4" fill="#ff0000"/><rect x="0.5" y="0.5" width="15" height="14" fill="none" stroke="#000" stroke-width="1"/></svg>
<svg class="ic" style="left:773px;top:57px" viewBox="0 0 16 16"><rect x="0.5" y="0.5" width="15" height="14" fill="#00ffff" stroke="#000" stroke-width="1"/><g stroke="#ff0000" stroke-width="1.1" fill="none"><circle cx="8" cy="5" r="1.8"/><path d="M2,7 Q3,3 8,2.4 Q13,3 14,7 M3,7.2 H13 M8,7 V10 M5,8.4 L8,10 L11,8.4 M8,10 L3.4,14 M8,10 L12.6,14 M5.4,14 L8,11.8 L10.6,14"/></g></svg>
<svg class="ic" style="left:797px;top:57px" viewBox="0 0 16 16"><rect x="0.5" y="0.5" width="15" height="14" fill="#00ffff" stroke="#000" stroke-width="1"/><path d="M5,14 L15,9.4 V14 Z" fill="#00c000"/><path d="M4,14.4 L15.4,9" stroke="#000" stroke-width="1"/><path d="M8.4,3 V12 M5.4,6.2 H11.6" stroke="#0000ff" stroke-width="1.9" fill="none"/><path d="M1,1 H4 V2.6 L2.6,4 H1 Z" fill="#ffff00"/><rect x="1" y="1" width="1.4" height="1.4" fill="#ff0000"/><rect x="0.5" y="0.5" width="15" height="14" fill="none" stroke="#000" stroke-width="1"/></svg>
<svg class="ic" style="left:821px;top:57px" viewBox="0 0 16 16"><rect x="0.5" y="0.5" width="15" height="14" fill="#00ffff" stroke="#000" stroke-width="1"/><rect x="1" y="5" width="14" height="1.4" fill="#ffff00"/><rect x="1" y="6.4" width="14" height="1" fill="#808000"/><rect x="1" y="7.4" width="14" height="2.4" fill="#ffff00"/><rect x="1" y="9.8" width="14" height="4.4" fill="#800000"/><rect x="5.6" y="2" width="4.8" height="10" fill="#fff" stroke="#000" stroke-width="1.1"/><rect x="0.5" y="0.5" width="15" height="14" fill="none" stroke="#000" stroke-width="1"/></svg>
<div id="tabs"></div>
<svg style="position:absolute;left:0;top:79px" width="913" height="26" viewBox="0 0 913 26">
<g fill="#f0f0f0" stroke="#a8a8a8" stroke-width="1.2">
<path d="M0.5,22 L20.5,1.5 L116,1.5 Q119.5,1.5 119.5,5 L119.5,22"/>
<path d="M119.5,22 L119.5,8 L126.5,1.5 L220.5,1.5 Q224,1.5 224,5 L224,22"/>
<path d="M224,22 L224,8 L231,1.5 L312.5,1.5 Q316,1.5 316,5 L316,22"/>
<path d="M421.5,22 L421.5,8 L428.5,1.5 L522.5,1.5 Q526,1.5 526,5 L526,22"/>
<path d="M302.5,22.5 L322.5,1.5 L418,1.5 Q421.5,1.5 421.5,5 L421.5,22.5" fill="#ffffff"/>
</g>
<rect x="0" y="22" width="913" height="1" fill="#c4c4c4"/>
<rect x="0" y="23" width="913" height="1" fill="#808080"/>
<rect x="0" y="24" width="913" height="1" fill="#707070"/>
<rect x="0" y="25" width="913" height="1" fill="#b4b4b4"/>
<rect x="404" y="5" width="15" height="15" fill="#c75050"/>
<path d="M409,10.5 L414,15.5 M414,10.5 L409,15.5" stroke="#fff" stroke-width="1.5" fill="none"/>
</svg>
<svg class="ic" style="left:22px;top:82px" viewBox="0 0 16 16" shape-rendering="crispEdges"><rect x="0" y="0" width="16" height="16" fill="#00ffff"/><rect x="3.4" y="1" width="11" height="1.4" fill="#000"/><rect x="3.4" y="3.4" width="11" height="1.4" fill="#000"/><rect x="3.4" y="5.8" width="11" height="1.4" fill="#000"/><rect x="3.4" y="8.2" width="11" height="1.4" fill="#000"/><rect x="3.4" y="10.6" width="11" height="1.4" fill="#000"/><rect x="3.4" y="13" width="11" height="1.4" fill="#000"/><rect x="1.4" y="1.4" width="1" height="1" fill="#fff"/><rect x="1.4" y="6" width="1" height="1" fill="#fff"/><rect x="1.4" y="10.8" width="1" height="1" fill="#fff"/><rect x="1.4" y="13.4" width="1" height="1" fill="#fff"/></svg>
<span class="tabt" style="left:46px;letter-spacing:-0.317px">Project View</span>
<svg class="ic" style="left:128px;top:82px" viewBox="0 0 16 16" shape-rendering="crispEdges"><rect x="0" y="0" width="16" height="16" fill="#00ffff"/><rect x="0" y="13" width="16" height="2" fill="#00e000"/><rect x="15" y="0" width="1" height="16" fill="#000"/><path d="M1,6 L4.5,9.5 H7 M8.5,9.5 H10 M11.5,9.5 H15 M14.5,6 V13" stroke="#000" stroke-width="1" fill="none"/><rect x="0" y="15" width="16" height="1" fill="#000"/><rect x="0" y="0" width="3" height="3" fill="#ff0000"/><rect x="1" y="0" width="1" height="3" fill="#ffff00"/><rect x="0" y="1" width="3" height="1" fill="#ffff00"/></svg>
<span class="tabt" style="left:152px;letter-spacing:-0.195px">Profile View</span>
<svg class="ic" style="left:232px;top:82px" viewBox="0 0 16 16" shape-rendering="crispEdges"><rect x="0" y="0" width="16" height="16" fill="#00ffff"/><rect x="15" y="0" width="1" height="16" fill="#000"/><rect x="0" y="15" width="16" height="1" fill="#000"/><path d="M1,14.5 L5,12.5 L10,11 L10.5,8 L7.5,5.5 L9,3 L14,0.8" stroke="#e00000" stroke-width="1.3" fill="none" shape-rendering="auto"/><rect x="0.6" y="13.8" width="1.4" height="1.4" fill="#0000ff"/><rect x="9.6" y="10.4" width="1.4" height="1.4" fill="#0000ff"/><rect x="7" y="5" width="1.4" height="1.4" fill="#0000ff"/><rect x="13.4" y="0.4" width="1.4" height="1.4" fill="#0000ff"/></svg>
<span class="tabt" style="left:256.5px;letter-spacing:-0.520px">Plan View</span>
<svg class="ic" style="left:325px;top:82px" viewBox="0 0 16 16" shape-rendering="crispEdges"><rect x="0" y="0" width="16" height="16" fill="#00ffff"/><path d="M0,11 L15,1 V16 H0 Z" fill="#00e800"/><path d="M6,16 L15,7 V11 L11,16 Z" fill="#108088"/><path d="M5,15.5 L14.5,5.5" stroke="#ff0000" stroke-width="1" stroke-dasharray="1.4 2.6" fill="none"/><path d="M10,15.5 L14.5,10.5" stroke="#ff0000" stroke-width="1" stroke-dasharray="1.4 2.6" fill="none"/><path d="M1.5,4 V15.5 M0,15.5 H16 M15.5,0 V16" stroke="#000" stroke-width="1" fill="none"/><rect x="2" y="5" width="1" height="1" fill="#000"/><rect x="5" y="4" width="1" height="1" fill="#000"/><rect x="8" y="4" width="1" height="1" fill="#000"/><rect x="11" y="3" width="1" height="1" fill="#000"/><rect x="13" y="2" width="1.4" height="1.6" fill="#000"/><rect x="14" y="1" width="1" height="1" fill="#000"/><rect x="0" y="0" width="3" height="3" fill="#ff0000"/><rect x="1" y="0" width="1" height="3" fill="#ffff00"/><rect x="0" y="1" width="3" height="1" fill="#ffff00"/></svg>
<span class="tabt" style="left:352px;font-weight:bold;letter-spacing:-0.719px">3D View</span>
<svg class="ic" style="left:430px;top:82px" viewBox="0 0 16 16" shape-rendering="crispEdges"><rect x="0" y="0" width="16" height="16" fill="#00ffff"/><path d="M0,6.5 H15 M0,11.5 H15 M2.5,6 V15 M7.5,6 V15 M12.5,6 V15" stroke="#909090" stroke-width="1" fill="none"/><rect x="3" y="14" width="12" height="1" fill="#00e000"/><path d="M1,3.5 H9 M1.5,9 V15 M1,10.5 H8 M7.5,8 V14 M8,9.5 H10 M10.5,9.5 H12 M12,8.5 L14,6" stroke="#000" stroke-width="1" fill="none"/><rect x="10" y="2" width="1" height="1" fill="#000"/><rect x="13" y="1" width="1" height="1" fill="#000"/><rect x="15" y="0" width="1" height="16" fill="#000"/><rect x="0" y="15" width="16" height="1" fill="#000"/></svg>
<span class="tabt" style="left:454px;letter-spacing:-0.500px">Sheets View</span>
<div id="view">
<svg id="dw" style="position:absolute;left:0;top:-105px" width="913" height="914" viewBox="0 0 913 914">
<rect x="124" y="653" width="16" height="15" fill="#00ff00"/>
<rect x="214" y="656" width="16" height="15" fill="#00ff00"/>
<rect x="573" y="420" width="16" height="15" fill="#00ff00"/>
<rect x="665" y="422" width="16" height="15" fill="#00ff00"/>
<rect x="667" y="255" width="16" height="15" fill="#00ff00"/>
<rect x="757" y="258" width="16" height="15" fill="#00ff00"/>
<g fill="none" stroke-width="1" shape-rendering="crispEdges">
<path d="M704.70,611.90 L714.00,608.10 L722.20,604.20 L731.50,605.30 L746.70,601.10 L754.10,595.50 L758.30,596.50 L771.20,590.20 L775.80,591.30 L781.70,586.70 L786.30,588.50 L799.20,583.90 L805.00,585.00 L815.50,585.00 L821.30,582.50 L828.30,581.50 L840.00,576.20 L851.70,569.20 L863.30,567.30 L869.20,564.00 L873.80,565.20 L886.70,562.60 L890.90,556.30 L894.80,558.20 L903.00,557.50 L907.70,559.40 L914.00,559.40" stroke="#ffff00" stroke-dasharray="3 1"/>
<path d="M686.70,644.30 L681.00,660.00 L675.30,674.00 L671.00,685.50 L665.40,702.60 L659.70,725.30 L654.00,742.40 L646.90,765.20 L639.80,788.00 L632.70,810.70 L625.60,830.60 L618.50,850.50 L613.80,866.60 L612.20,868.60 L607.00,884.70 L605.50,887.00" stroke="#ffff00" stroke-dasharray="3 1"/>
<path d="M595.00,896.50 L589.00,899.00 L578.70,904.70 L569.70,913.00 L567.00,916.00" stroke="#ffff00" stroke-dasharray="3 1"/>
<g stroke="#ff0000">
<path d="M-2.00,741.70 C2.75,738.08 16.17,728.00 26.50,720.00 C36.83,712.00 52.58,699.55 60.00,693.70 C67.42,687.85 67.35,687.73 71.00,684.90 C74.65,682.07 78.43,679.28 81.90,676.70 C85.37,674.12 90.15,670.62 91.80,669.40"/>
<path d="M-2.00,785.20 C6.67,778.60 37.83,755.02 50.00,745.60 C62.17,736.18 65.68,732.97 71.00,728.70 C76.32,724.43 78.43,722.73 81.90,720.00 C85.37,717.27 90.15,713.58 91.80,712.30"/>
<path d="M-2.00,821.30 C6.67,815.12 38.60,792.30 50.00,784.20 C61.40,776.10 60.92,776.67 66.40,772.70 C71.88,768.73 77.15,764.78 82.90,760.40 C88.65,756.02 96.42,749.80 100.90,746.40 C105.38,743.00 105.67,743.13 109.80,740.00 C113.93,736.87 121.22,731.12 125.70,727.60 C130.18,724.08 132.08,722.55 136.70,718.90 C141.32,715.25 149.52,708.63 153.40,705.70 C157.28,702.77 156.22,704.22 160.00,701.30 C163.78,698.38 169.85,693.22 176.10,688.20 C182.35,683.18 193.93,674.03 197.50,671.20"/>
<path d="M-2.00,829.80 C6.67,822.88 38.60,797.40 50.00,788.30 C61.40,779.20 60.92,779.58 66.40,775.20 C71.88,770.82 78.65,765.15 82.90,762.00 C87.15,758.85 90.40,757.25 91.90,756.30"/>
<path d="M-2.00,865.90 C6.67,859.40 38.60,835.58 50.00,826.90 C61.40,818.22 60.92,818.18 66.40,813.80 C71.88,809.42 77.42,804.85 82.90,800.60 C88.38,796.35 93.83,792.27 99.30,788.30 C104.77,784.33 110.23,780.63 115.70,776.80 C121.17,772.97 125.80,769.87 132.10,765.30 C138.40,760.73 147.80,753.62 153.50,749.40 C159.20,745.18 162.53,742.90 166.30,740.00 C170.07,737.10 172.15,735.35 176.10,732.00 C180.05,728.65 186.43,722.63 190.00,719.90 C193.57,717.17 196.25,716.32 197.50,715.60"/>
<path d="M-2.00,910.50 C2.67,906.95 14.42,897.62 26.00,889.20 C37.58,880.78 53.92,869.87 67.50,860.00 C81.08,850.13 98.10,837.15 107.50,830.00 C116.90,822.85 118.42,821.32 123.90,817.10 C129.38,812.88 135.47,808.53 140.40,804.70 C145.33,800.87 148.03,798.47 153.50,794.10 C158.97,789.73 167.18,783.30 173.20,778.50 C179.22,773.70 185.57,768.55 189.60,765.30 C193.63,762.05 196.10,760.05 197.40,759.00"/>
<path d="M101.10,660.60 C103.38,660.27 110.70,659.30 114.80,658.60 C118.90,657.90 122.05,657.03 125.70,656.40 C129.35,655.77 133.05,655.43 136.70,654.80 C140.35,654.17 143.40,653.52 147.60,652.60 C151.80,651.68 155.87,650.85 161.90,649.30 C167.93,647.75 178.13,644.85 183.80,643.30 C189.47,641.75 186.53,643.07 195.90,640.00 C205.27,636.93 230.10,628.23 240.00,624.90 C249.90,621.57 247.30,623.32 255.30,620.00 C263.30,616.68 280.55,608.42 288.00,605.00 C295.45,601.58 291.33,603.62 300.00,599.50 C308.67,595.38 327.50,586.88 340.00,580.30 C352.50,573.72 363.67,566.88 375.00,560.00 C386.33,553.12 397.17,546.25 408.00,539.00 C418.83,531.75 431.02,523.07 440.00,516.50 C448.98,509.93 454.60,505.35 461.90,499.60 C469.20,493.85 477.32,486.93 483.80,482.00 C490.28,477.07 494.77,474.77 500.80,470.00 C506.83,465.23 514.97,457.82 520.00,453.40 C525.03,448.98 527.08,446.78 531.00,443.50 C534.92,440.22 541.42,435.33 543.50,433.70"/>
<path d="M213.90,662.50 C216.58,662.03 225.65,660.53 230.00,659.70 C234.35,658.87 234.68,658.73 240.00,657.50 C245.32,656.27 254.60,653.98 261.90,652.30 C269.20,650.62 276.50,649.22 283.80,647.40 C291.10,645.58 298.40,643.68 305.70,641.40 C313.00,639.12 321.88,635.68 327.60,633.70 C333.32,631.72 334.28,631.38 340.00,629.50 C345.72,627.62 354.60,625.22 361.90,622.40 C369.20,619.58 376.50,615.97 383.80,612.60 C391.10,609.23 398.40,605.67 405.70,602.20 C413.00,598.73 421.72,594.73 427.60,591.80 C433.48,588.87 436.95,586.88 441.00,584.60 C445.05,582.32 448.25,580.10 451.90,578.10 C455.55,576.10 459.25,574.52 462.90,572.60 C466.55,570.68 470.23,568.67 473.80,566.60 C477.37,564.53 478.98,563.52 484.30,560.20 C489.62,556.88 498.48,551.42 505.70,546.70 C512.92,541.98 521.88,535.65 527.60,531.90 C533.32,528.15 535.77,527.05 540.00,524.20 C544.23,521.35 549.18,517.55 553.00,514.80 C556.82,512.05 559.62,510.17 562.90,507.70 C566.18,505.23 569.85,502.35 572.70,500.00 C575.55,497.65 577.35,495.70 580.00,493.60 C582.65,491.50 586.08,489.20 588.60,487.40 C591.12,485.60 593.25,484.30 595.10,482.80 C596.95,481.30 598.29,479.67 599.70,478.40 C601.11,477.13 602.12,476.33 603.55,475.20 C604.98,474.07 606.09,473.42 608.30,471.60 C610.51,469.78 614.07,466.67 616.80,464.30 C619.53,461.93 621.85,459.75 624.70,457.40 C627.55,455.05 631.35,452.25 633.90,450.20 C636.45,448.15 638.50,446.38 640.00,445.10 C641.50,443.82 640.97,444.13 642.90,442.50 C644.83,440.87 650.15,436.50 651.60,435.30"/>
<path d="M101.10,704.60 C101.55,704.42 101.52,703.95 103.80,703.50 C106.08,703.05 111.15,702.53 114.80,701.90 C118.45,701.27 122.05,700.43 125.70,699.70 C129.35,698.97 133.05,698.23 136.70,697.50 C140.35,696.77 143.40,696.12 147.60,695.30 C151.80,694.48 155.87,694.15 161.90,692.60 C167.93,691.05 176.50,688.20 183.80,686.00 C191.10,683.80 198.40,681.58 205.70,679.40 C213.00,677.22 221.88,674.55 227.60,672.90 C233.32,671.25 234.28,671.57 240.00,669.50 C245.72,667.43 254.60,663.63 261.90,660.50 C269.20,657.37 278.32,653.22 283.80,650.70 C289.28,648.18 291.15,647.12 294.80,645.40 C298.45,643.68 300.23,643.17 305.70,640.40 C311.17,637.63 321.88,631.70 327.60,628.80 C333.32,625.90 334.28,625.78 340.00,623.00 C345.72,620.22 354.60,616.22 361.90,612.10 C369.20,607.98 376.50,602.97 383.80,598.30 C391.10,593.63 398.40,588.83 405.70,584.10 C413.00,579.37 421.88,573.80 427.60,569.90 C433.32,566.00 434.28,565.03 440.00,560.70 C445.72,556.37 454.60,549.52 461.90,543.90 C469.20,538.28 476.50,532.75 483.80,527.00 C491.10,521.25 498.40,515.52 505.70,509.40 C513.00,503.28 523.38,493.88 527.60,490.30 C531.82,486.72 528.35,490.03 531.00,487.90 C533.65,485.77 541.42,479.23 543.50,477.50"/>
<path d="M213.80,705.90 C216.10,705.50 223.23,704.27 227.60,703.50 C231.97,702.73 234.28,702.53 240.00,701.30 C245.72,700.07 254.60,697.78 261.90,696.10 C269.20,694.42 276.50,693.02 283.80,691.20 C291.10,689.38 298.40,687.48 305.70,685.20 C313.00,682.92 321.72,679.55 327.60,677.50 C333.48,675.45 336.95,674.27 341.00,672.90 C345.05,671.53 348.25,670.58 351.90,669.30 C355.55,668.02 359.25,666.65 362.90,665.20 C366.55,663.75 370.15,662.15 373.80,660.60 C377.45,659.05 381.15,657.50 384.80,655.90 C388.45,654.30 392.05,652.65 395.70,651.00 C399.35,649.35 402.68,647.83 406.70,646.00 C410.72,644.17 415.92,641.83 419.80,640.00 C423.68,638.17 426.47,636.92 430.00,635.00 C433.53,633.08 437.35,630.60 441.00,628.50 C444.65,626.40 448.25,624.42 451.90,622.40 C455.55,620.38 459.25,618.50 462.90,616.40 C466.55,614.30 470.15,611.98 473.80,609.80 C477.45,607.62 481.15,605.58 484.80,603.30 C488.45,601.02 492.05,598.38 495.70,596.10 C499.35,593.82 503.05,591.78 506.70,589.60 C510.35,587.42 513.95,585.38 517.60,583.00 C521.25,580.62 524.70,578.08 528.60,575.30 C532.50,572.52 537.12,569.20 541.00,566.30 C544.88,563.40 548.25,560.65 551.90,557.90 C555.55,555.15 559.25,552.52 562.90,549.80 C566.55,547.08 570.15,544.28 573.80,541.60 C577.45,538.92 581.15,536.43 584.80,533.70 C588.45,530.97 592.57,527.62 595.70,525.20 C598.83,522.78 600.87,521.30 603.60,519.20 C606.33,517.10 609.37,514.80 612.10,512.60 C614.83,510.40 617.02,508.60 620.00,506.00 C622.98,503.40 626.50,499.97 630.00,497.00 C633.50,494.03 637.35,491.17 641.00,488.20 C644.65,485.23 650.08,480.70 651.90,479.20"/>
<path d="M100.90,747.20 C101.73,747.07 100.70,747.22 105.90,746.40 C111.10,745.58 124.17,743.67 132.10,742.30 C140.03,740.93 146.65,739.57 153.50,738.20 C160.35,736.83 167.18,735.47 173.20,734.10 C179.22,732.73 182.70,732.15 189.60,730.00 C196.50,727.85 206.32,724.03 214.60,721.20 C222.88,718.37 231.42,715.90 239.30,713.00 C247.18,710.10 254.48,706.98 261.90,703.80 C269.32,700.62 278.32,696.37 283.80,693.90 C289.28,691.43 291.15,690.60 294.80,689.00 C298.45,687.40 300.23,686.85 305.70,684.30 C311.17,681.75 321.72,676.70 327.60,673.70 C333.48,670.70 336.95,668.53 341.00,666.30 C345.05,664.07 348.25,662.45 351.90,660.30 C355.55,658.15 359.25,655.60 362.90,653.40 C366.55,651.20 370.32,649.12 373.80,647.10 C377.28,645.08 378.48,644.68 383.80,641.30 C389.12,637.92 398.40,631.58 405.70,626.80 C413.00,622.02 421.72,616.62 427.60,612.60 C433.48,608.58 436.95,605.63 441.00,602.70 C445.05,599.77 448.25,597.60 451.90,595.00 C455.55,592.40 459.25,589.83 462.90,587.10 C466.55,584.37 470.15,581.47 473.80,578.60 C477.45,575.73 480.78,573.03 484.80,569.90 C488.82,566.77 494.42,562.58 497.90,559.80 C501.38,557.02 500.75,557.40 505.70,553.20 C510.65,549.00 522.67,538.80 527.60,534.60 C532.53,530.40 532.53,530.20 535.30,528.00 C538.07,525.80 542.72,522.50 544.20,521.40"/>
<path d="M212.70,750.00 C217.13,749.17 230.77,746.78 239.30,745.00 C247.83,743.22 255.68,741.30 263.90,739.30 C272.12,737.30 280.38,735.20 288.60,733.00 C296.82,730.80 306.30,728.00 313.20,726.10 C320.10,724.20 325.37,722.98 330.00,721.60 C334.63,720.22 337.35,719.17 341.00,717.80 C344.65,716.43 348.25,714.87 351.90,713.40 C355.55,711.93 359.25,710.47 362.90,709.00 C366.55,707.53 370.15,706.15 373.80,704.60 C377.45,703.05 381.15,701.33 384.80,699.70 C388.45,698.07 392.05,696.48 395.70,694.80 C399.35,693.12 403.05,691.40 406.70,689.60 C410.35,687.80 413.72,685.97 417.60,684.00 C421.48,682.03 422.10,681.80 430.00,677.80 C437.90,673.80 457.70,663.85 465.00,660.00 C472.30,656.15 470.50,656.78 473.80,654.70 C477.10,652.62 481.15,649.78 484.80,647.50 C488.45,645.22 492.05,643.27 495.70,641.00 C499.35,638.73 503.05,636.35 506.70,633.90 C510.35,631.45 513.95,628.77 517.60,626.30 C521.25,623.83 522.15,623.48 528.60,619.10 C535.05,614.72 550.58,604.07 556.30,600.00 C562.02,595.93 559.98,597.03 562.90,594.70 C565.82,592.37 570.15,588.92 573.80,586.00 C577.45,583.08 581.15,580.03 584.80,577.20 C588.45,574.37 592.57,571.28 595.70,569.00 C598.83,566.72 600.87,565.60 603.60,563.50 C606.33,561.40 608.85,559.13 612.10,556.40 C615.35,553.67 620.12,549.75 623.10,547.10 C626.08,544.45 627.02,543.10 630.00,540.50 C632.98,537.90 637.35,534.38 641.00,531.50 C644.65,528.62 650.08,524.58 651.90,523.20"/>
<path d="M550.10,428.00 C551.33,428.22 555.35,429.25 557.50,429.30 C559.65,429.35 560.95,428.98 563.00,428.30 C565.05,427.62 567.20,426.73 569.80,425.20 C572.40,423.67 575.97,421.43 578.60,419.10 C581.23,416.77 583.27,414.27 585.60,411.20 C587.93,408.13 590.27,404.65 592.60,400.70 C594.93,396.75 597.55,391.30 599.60,387.50 C601.65,383.70 603.37,380.82 604.90,377.90 C606.43,374.98 607.12,373.82 608.80,370.00 C610.48,366.18 613.57,358.75 615.00,355.00 C616.43,351.25 616.08,351.38 617.40,347.50 C618.72,343.62 621.08,337.27 622.90,331.70 C624.72,326.13 626.48,319.77 628.30,314.10 C630.12,308.43 632.15,302.98 633.80,297.70 C635.45,292.42 636.83,287.15 638.20,282.40 C639.57,277.65 641.37,271.40 642.00,269.20"/>
<path d="M550.10,471.50 C551.75,471.55 557.17,471.90 560.00,471.80 C562.83,471.70 564.63,471.68 567.10,470.90 C569.57,470.12 572.43,468.83 574.80,467.10 C577.17,465.37 579.12,463.05 581.30,460.50 C583.48,457.95 585.70,455.08 587.90,451.80 C590.10,448.52 592.67,443.93 594.50,440.80 C596.33,437.67 597.47,435.63 598.90,433.00 C600.33,430.37 601.82,427.50 603.10,425.00 C604.38,422.50 605.45,420.43 606.60,418.00 C607.75,415.57 608.98,412.73 610.00,410.40 C611.02,408.07 611.97,405.73 612.70,404.00 C613.43,402.27 613.18,403.12 614.40,400.00 C615.62,396.88 617.50,392.80 620.00,385.30 C622.50,377.80 627.10,362.30 629.40,355.00 C631.70,347.70 632.33,346.30 633.80,341.50 C635.27,336.70 636.83,330.95 638.20,326.20 C639.57,321.45 641.37,315.20 642.00,313.00"/>
<path d="M550.30,515.90 C551.92,515.88 557.18,515.98 560.00,515.80 C562.82,515.62 564.73,515.62 567.20,514.80 C569.67,513.98 572.45,512.65 574.80,510.90 C577.15,509.15 579.12,506.85 581.30,504.30 C583.48,501.75 585.70,498.88 587.90,495.60 C590.10,492.32 592.32,488.25 594.50,484.60 C596.68,480.95 598.82,477.72 601.00,473.70 C603.18,469.68 605.78,464.45 607.60,460.50 C609.42,456.55 610.77,452.98 611.90,450.00 C613.03,447.02 613.07,446.18 614.40,442.60 C615.73,439.02 618.27,432.67 619.90,428.50 C621.53,424.33 622.57,422.17 624.20,417.60 C625.83,413.03 627.82,407.20 629.70,401.10 C631.58,395.00 633.45,388.35 635.50,381.00 C637.55,373.65 640.92,361.00 642.00,357.00"/>
<path d="M658.20,428.70 C658.38,428.93 658.17,429.82 659.30,430.10 C660.43,430.38 663.72,430.40 665.00,430.40 C666.28,430.40 665.22,430.78 667.00,430.10 C668.78,429.42 673.33,427.40 675.70,426.30 C678.07,425.20 679.37,424.78 681.20,423.50 C683.03,422.22 684.88,420.33 686.70,418.60 C688.52,416.87 690.47,415.10 692.10,413.10 C693.73,411.10 694.70,409.28 696.50,406.60 C698.30,403.92 700.93,400.62 702.90,397.00 C704.87,393.38 706.48,388.92 708.30,384.90 C710.12,380.88 711.97,376.92 713.80,372.90 C715.63,368.88 717.72,364.28 719.30,360.80 C720.88,357.32 721.90,355.63 723.30,352.00 C724.70,348.37 726.13,343.67 727.70,339.00 C729.27,334.33 731.13,328.87 732.70,324.00 C734.27,319.13 735.63,314.37 737.10,309.80 C738.57,305.23 740.03,301.17 741.50,296.60 C742.97,292.03 744.53,286.50 745.90,282.40 C747.27,278.30 749.07,273.73 749.70,272.00"/>
<path d="M658.50,472.60 C658.68,472.68 658.33,472.92 659.60,473.10 C660.87,473.28 663.73,473.83 666.10,473.70 C668.47,473.57 671.42,473.08 673.80,472.30 C676.18,471.52 678.20,470.47 680.40,469.00 C682.60,467.53 684.82,465.78 687.00,463.50 C689.18,461.22 691.92,457.48 693.50,455.30 C695.08,453.12 695.22,452.40 696.50,450.40 C697.78,448.40 699.95,445.27 701.20,443.30 C702.45,441.33 702.53,441.35 704.00,438.60 C705.47,435.85 708.37,430.08 710.00,426.80 C711.63,423.52 712.25,422.05 713.80,418.90 C715.35,415.75 717.47,412.28 719.30,407.90 C721.13,403.52 722.98,397.90 724.80,392.60 C726.62,387.30 728.38,381.77 730.20,376.10 C732.02,370.43 734.55,362.20 735.70,358.60 C736.85,355.00 736.32,357.17 737.10,354.50 C737.88,351.83 739.12,346.77 740.40,342.60 C741.68,338.43 743.35,334.07 744.80,329.50 C746.25,324.93 748.38,317.58 749.10,315.20"/>
<path d="M659.00,516.50 C659.28,516.62 659.33,517.03 660.70,517.20 C662.07,517.37 665.02,517.68 667.20,517.50 C669.38,517.32 671.60,516.97 673.80,516.10 C676.00,515.23 678.20,513.93 680.40,512.30 C682.60,510.67 684.82,508.50 687.00,506.30 C689.18,504.10 691.92,500.93 693.50,499.10 C695.08,497.27 695.22,497.30 696.50,495.30 C697.78,493.30 699.50,490.30 701.20,487.10 C702.90,483.90 704.88,479.85 706.70,476.10 C708.52,472.35 710.28,468.52 712.10,464.60 C713.92,460.68 715.72,456.70 717.60,452.60 C719.48,448.50 721.30,445.62 723.40,440.00 C725.50,434.38 728.15,425.17 730.20,418.90 C732.25,412.63 734.05,407.70 735.70,402.40 C737.35,397.10 738.63,392.20 740.10,387.10 C741.57,382.00 743.03,376.55 744.50,371.80 C745.97,367.05 748.17,360.80 748.90,358.60"/>
<path d="M654.00,262.10 C656.17,261.90 661.00,261.35 667.00,260.90 C673.00,260.45 679.87,260.38 690.00,259.40 C700.13,258.42 714.17,256.52 727.80,255.00 C741.43,253.48 759.93,251.73 771.80,250.30 C783.67,248.87 789.63,247.80 799.00,246.40 C808.37,245.00 808.67,244.92 828.00,241.90 C847.33,238.88 900.50,230.57 915.00,228.30"/>
<path d="M762.30,264.90 C766.92,264.43 783.88,262.83 790.00,262.10 C796.12,261.37 778.17,262.87 799.00,260.50 C819.83,258.13 895.67,250.00 915.00,247.90"/>
<path d="M654.60,305.90 C660.50,305.32 678.62,303.48 690.00,302.40 C701.38,301.32 711.95,300.55 722.90,299.40 C733.85,298.25 744.52,296.88 755.70,295.50 C766.88,294.12 782.78,292.00 790.00,291.10 C797.22,290.20 778.17,293.30 799.00,290.10 C819.83,286.90 895.67,274.93 915.00,271.90"/>
<path d="M762.30,308.70 C766.92,308.15 783.88,306.08 790.00,305.40 C796.12,304.72 778.17,307.05 799.00,304.60 C819.83,302.15 895.67,293.02 915.00,290.70"/>
<path d="M654.60,349.70 C657.17,349.45 664.10,348.83 670.00,348.20 C675.90,347.57 681.18,346.83 690.00,345.90 C698.82,344.97 711.95,343.78 722.90,342.60 C733.85,341.42 744.52,340.07 755.70,338.80 C766.88,337.53 782.78,335.92 790.00,335.00 C797.22,334.08 778.17,336.43 799.00,333.30 C819.83,330.17 895.67,319.05 915.00,316.20"/>
<path d="M761.20,351.90 C766.00,351.42 783.70,349.60 790.00,349.00 C796.30,348.40 778.17,350.62 799.00,348.30 C819.83,345.98 895.67,337.30 915.00,335.10"/>
<path d="M153.5,663 V914 M603.5,428 V887 M696.5,264.5 V606"/>
<path d="M101.1,660.6 L160,661.9 L214.5,662.8 M101.1,704.6 L153.1,705.7 L213.4,706.3 M100.9,747.2 L153.5,749.4 L200,750.5 L212.7,750.5"/>
<path d="M550.1,428 L620,428.5 L658.2,428.7 L660,430.2 L665,430.4 M550.1,471.5 L620,472.4 L658.5,472.6 M550.3,515.9 L659,516.5"/>
<path d="M654,264.3 L696.4,264.6 L747,266 M655,306.8 L671,307.2 L671,308.1 L747,309.2 M655,351.4 L690,351.6 L722.9,352.5 L747,353.4"/>
<path d="M116,662.1 H124" stroke-dasharray="1 1.4"/>
<path d="M159,663.1 H166" stroke-dasharray="1 1.4"/>
<path d="M192,663.7 H203" stroke-dasharray="1 1.4"/>
<path d="M173,707.1 H181" stroke-dasharray="1 1.4"/>
<path d="M127,750.1 H139" stroke-dasharray="1 1.4"/>
<path d="M558,429.5 H572" stroke-dasharray="1 1.4"/>
<path d="M630,429.9 H654" stroke-dasharray="1 1.4"/>
<path d="M553,472.9 H562" stroke-dasharray="1 1.4"/>
<path d="M578,473.3 H589" stroke-dasharray="1 1.4"/>
<path d="M553,517.3 H562" stroke-dasharray="1 1.4"/>
<path d="M615,517.7 H630" stroke-dasharray="1 1.4"/>
<path d="M700,266.1 H716" stroke-dasharray="1 1.4"/>
<path d="M708,309.3 H716" stroke-dasharray="1 1.4"/>
</g>
<path d="M697,540.5 H718" stroke="#000"/>
<path d="M0,870.5 H62.5 V914 M27.5,888 V914" stroke="#000"/>
</g>
<g shape-rendering="crispEdges">
<path d="M91.8,669.4 L101.1,660.6" stroke="#3a0a0a" stroke-width="1.25" fill="none"/>
<path d="M91.8,712.3 L101.1,704.6" stroke="#3a0a0a" stroke-width="1.25" fill="none"/>
<path d="M91.9,756.3 L100.9,747.2" stroke="#3a0a0a" stroke-width="1.25" fill="none"/>
<path d="M197.5,671.2 L206.8,663" stroke="#3a0a0a" stroke-width="1.25" fill="none"/>
<path d="M197.5,715.6 L206.8,706.8" stroke="#3a0a0a" stroke-width="1.25" fill="none"/>
<path d="M197.4,759 L206.4,750.5" stroke="#3a0a0a" stroke-width="1.25" fill="none"/>
<path d="M206.8,663 L213.9,662.5" stroke="#3a0a0a" stroke-width="1.3"/>
<path d="M206.8,706.8 L213.9,706" stroke="#3a0a0a" stroke-width="1.3"/>
<path d="M206.4,750.5 L212.7,750" stroke="#3a0a0a" stroke-width="1.3"/>
<path d="M101.1,660.6 L103,660.6" stroke="#3a0a0a" stroke-width="1.3"/>
<path d="M101.1,704.6 L107,703.5" stroke="#3a0a0a" stroke-width="1.3"/>
<path d="M100.9,747.2 L107.5,746.4" stroke="#3a0a0a" stroke-width="1.3"/>
<path d="M543.5,433.7 L550.1,427.9" stroke="#3a0a0a" stroke-width="1.25" fill="none"/>
<path d="M543.5,477.5 L550.1,471.5" stroke="#3a0a0a" stroke-width="1.25" fill="none"/>
<path d="M544.2,521.4 L550.3,515.9" stroke="#3a0a0a" stroke-width="1.25" fill="none"/>
<path d="M651.6,435.3 L658.2,428.7" stroke="#3a0a0a" stroke-width="1.25" fill="none"/>
<path d="M651.9,479.2 L658.5,472.6" stroke="#3a0a0a" stroke-width="1.25" fill="none"/>
<path d="M651.9,523.2 L659,516.5" stroke="#3a0a0a" stroke-width="1.25" fill="none"/>
<path d="M644.8,259.9 H654.3 V265.9 H646.3 Z" fill="#d00000"/><path d="M640.3,266.4 L643.3,262.9 L646.3,261.9 L647.3,265.9 L645.3,268.9 L643.8,270.9 L641.8,267.9 L639.3,267.9 Z" fill="#b00000"/>
<path d="M644.8,303.2 H654.3 V309.2 H646.3 Z" fill="#d00000"/><path d="M640.3,309.7 L643.3,306.2 L646.3,305.2 L647.3,309.2 L645.3,312.2 L643.8,314.2 L641.8,311.2 L639.3,311.2 Z" fill="#b00000"/>
<path d="M644.8,347 H654.3 V353 H646.3 Z" fill="#d00000"/><path d="M640.3,353.5 L643.3,350 L646.3,349 L647.3,353 L645.3,356 L643.8,358 L641.8,355 L639.3,355 Z" fill="#b00000"/>
<path d="M751.9,262.1 H759.4 L761.9,264.6 L759.4,267.70000000000005 H750.9 Z" fill="#d00000"/><path d="M746.4,267.1 L748.9,265.1 L752.4,263.6 L752.4,268.1 L751.4,271.1 L749.9,272.6 L748.4,270.1 L746.4,269.6 Z" fill="#b00000"/>
<path d="M751.9,305.9 H759.4 L761.9,308.4 L759.4,311.5 H750.9 Z" fill="#d00000"/><path d="M746.4,310.9 L748.9,308.9 L752.4,307.4 L752.4,311.9 L751.4,314.9 L749.9,316.4 L748.4,313.9 L746.4,313.4 Z" fill="#b00000"/>
<path d="M752,349.3 H759.5 L762,351.8 L759.5,354.90000000000003 H751 Z" fill="#d00000"/><path d="M746.5,354.3 L749,352.3 L752.5,350.8 L752.5,355.3 L751.5,358.3 L750,359.8 L748.5,357.3 L746.5,356.8 Z" fill="#b00000"/>
</g>
<text transform="translate(132.0 666.4) scale(0.86 1)" text-anchor="middle" font-family="Liberation Sans, sans-serif" font-size="16" font-weight="normal" fill="#000">G</text>
<text transform="translate(222.0 669.4) scale(0.86 1)" text-anchor="middle" font-family="Liberation Sans, sans-serif" font-size="16" font-weight="normal" fill="#000">G</text>
<text transform="translate(581.0 433.4) scale(0.86 1)" text-anchor="middle" font-family="Liberation Sans, sans-serif" font-size="16" font-weight="normal" fill="#000">G</text>
<text transform="translate(673.0 435.4) scale(0.86 1)" text-anchor="middle" font-family="Liberation Sans, sans-serif" font-size="16" font-weight="normal" fill="#000">G</text>
<text transform="translate(675.0 268.4) scale(0.86 1)" text-anchor="middle" font-family="Liberation Sans, sans-serif" font-size="16" font-weight="normal" fill="#000">G</text>
<text transform="translate(765.0 271.4) scale(0.86 1)" text-anchor="middle" font-family="Liberation Sans, sans-serif" font-size="16" font-weight="normal" fill="#000">G</text>
<rect x="688" y="606" width="16" height="14" fill="#00ff00"/><text transform="translate(696.0 619.1999999999999) scale(0.88 1)" text-anchor="middle" font-family="Liberation Sans, sans-serif" font-size="16.4" font-weight="bold" fill="#000">G</text>
<rect x="595" y="887" width="16" height="14" fill="#00ff00"/><text transform="translate(603.0 900.1999999999999) scale(0.88 1)" text-anchor="middle" font-family="Liberation Sans, sans-serif" font-size="16.4" font-weight="bold" fill="#000">G</text>
<g font-family="Liberation Sans, sans-serif" font-size="12.4" fill="#000" text-anchor="middle">
<text x="153" y="629.4">8</text><text x="603" y="396.2">9</text><text x="696.3" y="232.4">10</text>
</g>
<g font-family="Liberation Mono, monospace" font-size="13" fill="#000" text-anchor="middle">
<text x="697.3" y="631">33% 0%</text><text x="696.6" y="644">OK 0%</text><text x="604.2" y="912">42% 0%</text>
</g>
<g font-family="Liberation Sans, sans-serif" font-size="12.6" fill="#000">
<text x="23.3" y="887.8">Z</text><text x="0" y="920.6">Y</text><text x="50.6" y="920.6">X</text>
</g>
</svg>
</div>
</body></html>
